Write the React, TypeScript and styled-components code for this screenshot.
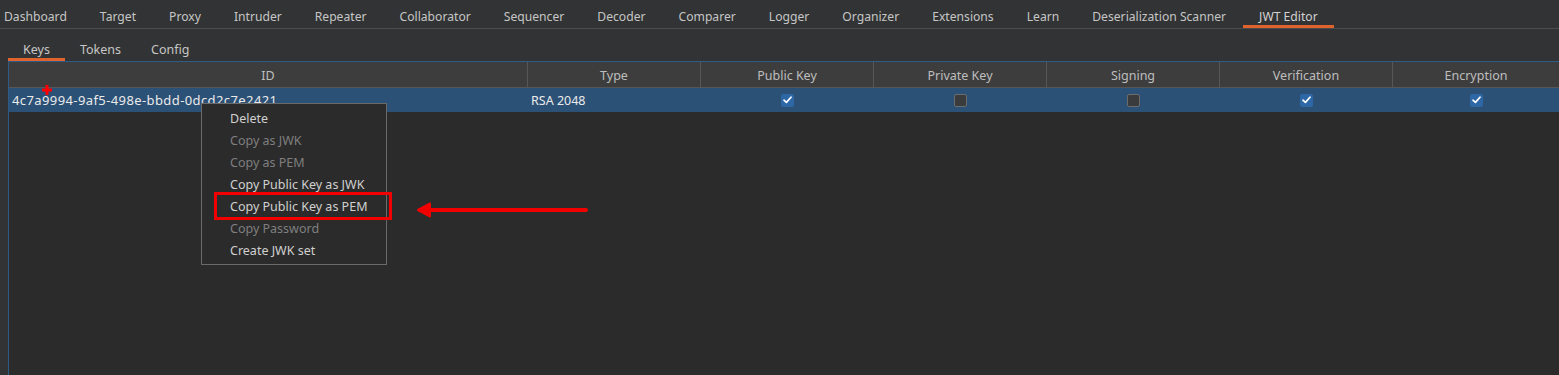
import React from "react";
import styled, { createGlobalStyle } from "styled-components";

const Global = createGlobalStyle`
  html, body { margin: 0; padding: 0; background: #2b2b2b; }
  body { font-family: "Noto Sans", "Open Sans", sans-serif; font-size: 12px; color: #c9c9c9; }
  #root { width: 1559px; height: 375px; overflow: hidden; }
`;

const Page = styled.div`
  position: relative;
  width: 1559px;
  height: 375px;
  display: flex;
  flex-direction: column;
  background: #2b2b2b;
`;

const TopBar = styled.div`
  display: flex;
  height: 28px;
  background: #323334;
  border-bottom: 1px solid #4b4c4e;
`;

const TopTab = styled.div<{ $active?: boolean; $first?: boolean }>`
  display: flex;
  align-items: center;
  padding: 7px 16.5px 0 ${(p) => (p.$first ? "4px" : "16.5px")};
  height: 28px;
  box-sizing: border-box;
  color: ${(p) => (p.$active ? "#d2d2d2" : "#c6c6c6")};
  border-bottom: 3px solid ${(p) => (p.$active ? "#e0622c" : "transparent")};
  white-space: nowrap;
  font-size: 12.15px;
`;

const SubBar = styled.div`
  display: flex;
  height: 32px;
  background: #323334;
  padding-left: 8px;
  align-items: flex-end;
`;

const SubTab = styled.div<{ $active?: boolean }>`
  display: flex;
  align-items: center;
  height: 29px;
  box-sizing: border-box;
  padding: 8px 15px 0;
  font-size: 12.5px;
  color: #c6c6c6;
  border-bottom: 3px solid ${(p) => (p.$active ? "#e0622c" : "transparent")};
`;

const Body = styled.div`
  flex: 1;
  display: flex;
  background: #323334;
`;

const Table = styled.div`
  margin-left: 8px;
  flex: 1;
  display: flex;
  flex-direction: column;
  border-top: 1px solid #2f5b87;
  border-left: 1px solid #2f5b87;
  background: #2b2b2b;
`;

const cols = "519px 173px 173px 173px 173px 173px 1fr";

const HeaderRow = styled.div`
  display: grid;
  grid-template-columns: ${cols};
  height: 25px;
  background: #3d3d3e;
  border-bottom: 1px solid #555658;
`;

const HeadCell = styled.div<{ $last?: boolean }>`
  display: flex;
  align-items: center;
  justify-content: center;
  padding-top: 2px;
  color: #bdbdbd;
  font-size: 12.5px;
  border-right: ${(p) => (p.$last ? "none" : "1px solid #565759")};
`;

const DataRow = styled.div`
  display: grid;
  grid-template-columns: ${cols};
  height: 24px;
  background: #2c5177;
`;

const Cell = styled.div<{ $center?: boolean; $id?: boolean }>`
  display: flex;
  align-items: center;
  justify-content: ${(p) => (p.$center ? "center" : "flex-start")};
  padding-left: ${(p) => (p.$center ? "0" : "3px")};
  color: #eaeaea;
  font-size: ${(p) => (p.$id ? "13px" : "12.5px")};
  letter-spacing: ${(p) => (p.$id ? "0.4px" : "0")};
  white-space: nowrap;
`;

const Check = styled.div<{ $on?: boolean }>`
  width: 13px;
  height: 13px;
  border-radius: 2px;
  box-sizing: border-box;
  background: ${(p) => (p.$on ? "#2e67a6" : "#3a3b3c")};
  border: 1px solid ${(p) => (p.$on ? "#2e67a6" : "#6b6c6e")};
  display: flex;
  align-items: center;
  justify-content: center;
`;

const Menu = styled.div`
  position: absolute;
  left: 201px;
  top: 103px;
  width: 186px;
  height: 162px;
  box-sizing: border-box;
  background: #2b2b2b;
  border: 1px solid #6a6a6a;
  padding-top: 3px;
  display: flex;
  flex-direction: column;
`;

const MenuItem = styled.div<{ $disabled?: boolean }>`
  height: 22px;
  display: flex;
  align-items: center;
  padding-left: 28px;
  font-size: 12.5px;
  color: ${(p) => (p.$disabled ? "#7f7f7f" : "#d0d0d0")};
  white-space: nowrap;
`;

const RedBox = styled.div`
  position: absolute;
  left: 214px;
  top: 192px;
  width: 178px;
  height: 28px;
  box-sizing: border-box;
  border: 3.5px solid #f20000;
`;

const Arrow = styled.svg`
  position: absolute;
  left: 414px;
  top: 200px;
`;

const Plus = styled.svg`
  position: absolute;
  left: 41px;
  top: 84px;
`;

const tabs = [
  "Dashboard", "Target", "Proxy", "Intruder", "Repeater", "Collaborator", "Sequencer",
  "Decoder", "Comparer", "Logger", "Organizer", "Extensions", "Learn",
  "Deserialization Scanner", "JWT Editor",
];

const CheckMark = () => (
  <svg width="9" height="8" viewBox="0 0 9 8">
    <path d="M1 4.2 L3.4 6.4 L8 1.2" fill="none" stroke="#ffffff" strokeWidth="1.7" strokeLinecap="round" strokeLinejoin="round" />
  </svg>
);

const Box = ({ on }: { on?: boolean }) => <Check $on={on}>{on && <CheckMark />}</Check>;

export default function App() {
  return (
    <Page>
      <Global />
      <TopBar>
        {tabs.map((t, i) => (
          <TopTab key={t} $first={i === 0} $active={t === "JWT Editor"}>
            {t}
          </TopTab>
        ))}
      </TopBar>
      <SubBar>
        <SubTab $active>Keys</SubTab>
        <SubTab>Tokens</SubTab>
        <SubTab>Config</SubTab>
      </SubBar>
      <Body>
        <Table>
          <HeaderRow>
            <HeadCell>ID</HeadCell>
            <HeadCell>Type</HeadCell>
            <HeadCell>Public Key</HeadCell>
            <HeadCell>Private Key</HeadCell>
            <HeadCell>Signing</HeadCell>
            <HeadCell>Verification</HeadCell>
            <HeadCell $last>Encryption</HeadCell>
          </HeaderRow>
          <DataRow>
            <Cell $id>4c7a9994-9af5-498e-bbdd-0dcd2c7e2421</Cell>
            <Cell>RSA 2048</Cell>
            <Cell $center><Box on /></Cell>
            <Cell $center><Box /></Cell>
            <Cell $center><Box /></Cell>
            <Cell $center><Box on /></Cell>
            <Cell $center><Box on /></Cell>
          </DataRow>
        </Table>
      </Body>
      <Plus width="12" height="12" viewBox="0 0 12 12">
        <path d="M6 1 V11 M1 6 H11" stroke="#ff0000" strokeWidth="3" />
      </Plus>
      <Menu>
        <MenuItem>Delete</MenuItem>
        <MenuItem $disabled>Copy as JWK</MenuItem>
        <MenuItem $disabled>Copy as PEM</MenuItem>
        <MenuItem>Copy Public Key as JWK</MenuItem>
        <MenuItem>Copy Public Key as PEM</MenuItem>
        <MenuItem $disabled>Copy Password</MenuItem>
        <MenuItem>Create JWK set</MenuItem>
      </Menu>
      <RedBox />
      <Arrow width="176" height="20" viewBox="0 0 176 20">
        <path d="M172 10 H6" stroke="#f20000" strokeWidth="4" strokeLinecap="round" />
        <path d="M16 3.5 L4 10 L16 16.5 Z" fill="#f20000" stroke="#f20000" strokeWidth="2" strokeLinejoin="round" />
      </Arrow>
    </Page>
  );
}
